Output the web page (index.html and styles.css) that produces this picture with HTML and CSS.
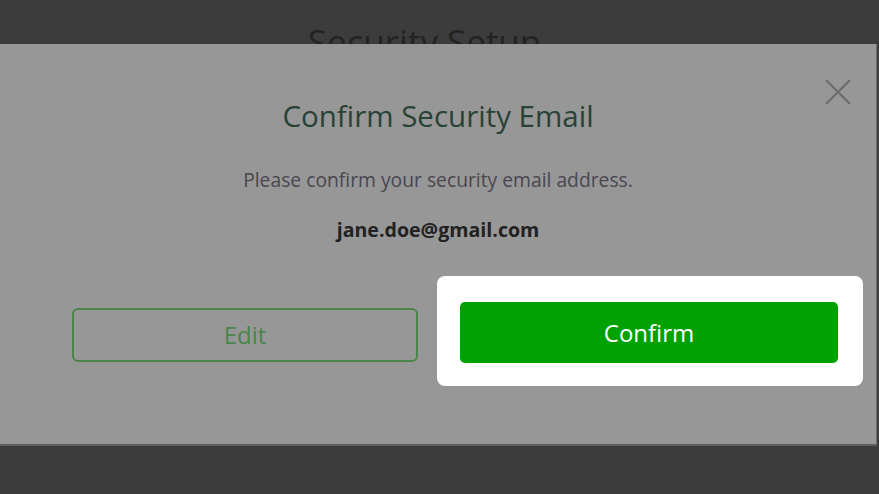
FILE: index.html
```html
<!DOCTYPE html>
<html>
<head>
<meta charset="utf-8">
<link rel="stylesheet" href="styles.css">
</head>
<body>
<div class="page">
  <h1 class="page-title">Security Setup</h1>
</div>
<div class="modal">
  <button class="close" aria-label="Close">
    <svg width="28" height="28" viewBox="0 0 28 28"><path d="M2 2 L26 26 M26 2 L2 26" stroke="#6b6b6b" stroke-width="2" fill="none"/></svg>
  </button>
  <h2 class="title">Confirm Security Email</h2>
  <p class="subtitle">Please confirm your security email address.</p>
  <p class="email">jane.doe@gmail.com</p>
  <div class="actions">
    <button class="btn btn-edit">Edit</button>
    <div class="highlight">
      <button class="btn btn-confirm">Confirm</button>
    </div>
  </div>
</div>
</body>
</html>
```

FILE: styles.css
```css
html, body {
  margin: 0;
  padding: 0;
  width: 879px;
  height: 494px;
  overflow: hidden;
  background: #3c3c3c;
  font-family: "Open Sans", "Noto Sans", sans-serif;
}
.page {
  display: flex;
  justify-content: center;
  padding-top: 20px;
}
.page-title {
  margin: 0 0 0 -30px;
  font-weight: 400;
  font-size: 35px;
  line-height: 44px;
  color: #232323;
}
.modal {
  position: absolute;
  top: 44px;
  left: 0;
  width: 876px;
  height: 400px;
  background: #979797;
  border-right: 1px solid #6f6f6f;
  border-bottom: 2px solid #5e5e5e;
  display: flex;
  flex-direction: column;
  align-items: center;
}
.close {
  position: absolute;
  top: 34px;
  left: 824px;
  background: none;
  border: 0;
  padding: 0;
  width: 28px;
  height: 28px;
}
.title {
  margin: 52px 0 0;
  font-weight: 400;
  font-size: 29.5px;
  line-height: 40px;
  color: #284238;
}
.subtitle {
  margin: 32px 0 0;
  font-size: 19.3px;
  line-height: 24px;
  color: #4a4650;
}
.email {
  margin: 26px 0 0;
  font-size: 19.6px;
  font-weight: 700;
  line-height: 24px;
  color: #222;
}
.actions {
  align-self: stretch;
  display: flex;
  align-items: center;
  padding-left: 72px;
  margin-top: 34px;
  gap: 19px;
}
.btn {
  font-family: inherit;
  cursor: pointer;
}
.btn-edit {
  width: 346px;
  height: 54px;
  margin-top: 7px;
  background: transparent;
  border: 2px solid #4a854a;
  border-radius: 6px;
  color: #4a854a;
  font-size: 24px;
}
.highlight {
  width: 426px;
  height: 110px;
  box-sizing: border-box;
  background: #fff;
  border-radius: 8px;
  padding: 26px 25px 0 23px;
}
.btn-confirm {
  width: 378px;
  height: 61px;
  background: #01a101;
  border: 0;
  border-radius: 5px;
  color: #fff;
  font-size: 24px;
  font-weight: 500;
}
```
